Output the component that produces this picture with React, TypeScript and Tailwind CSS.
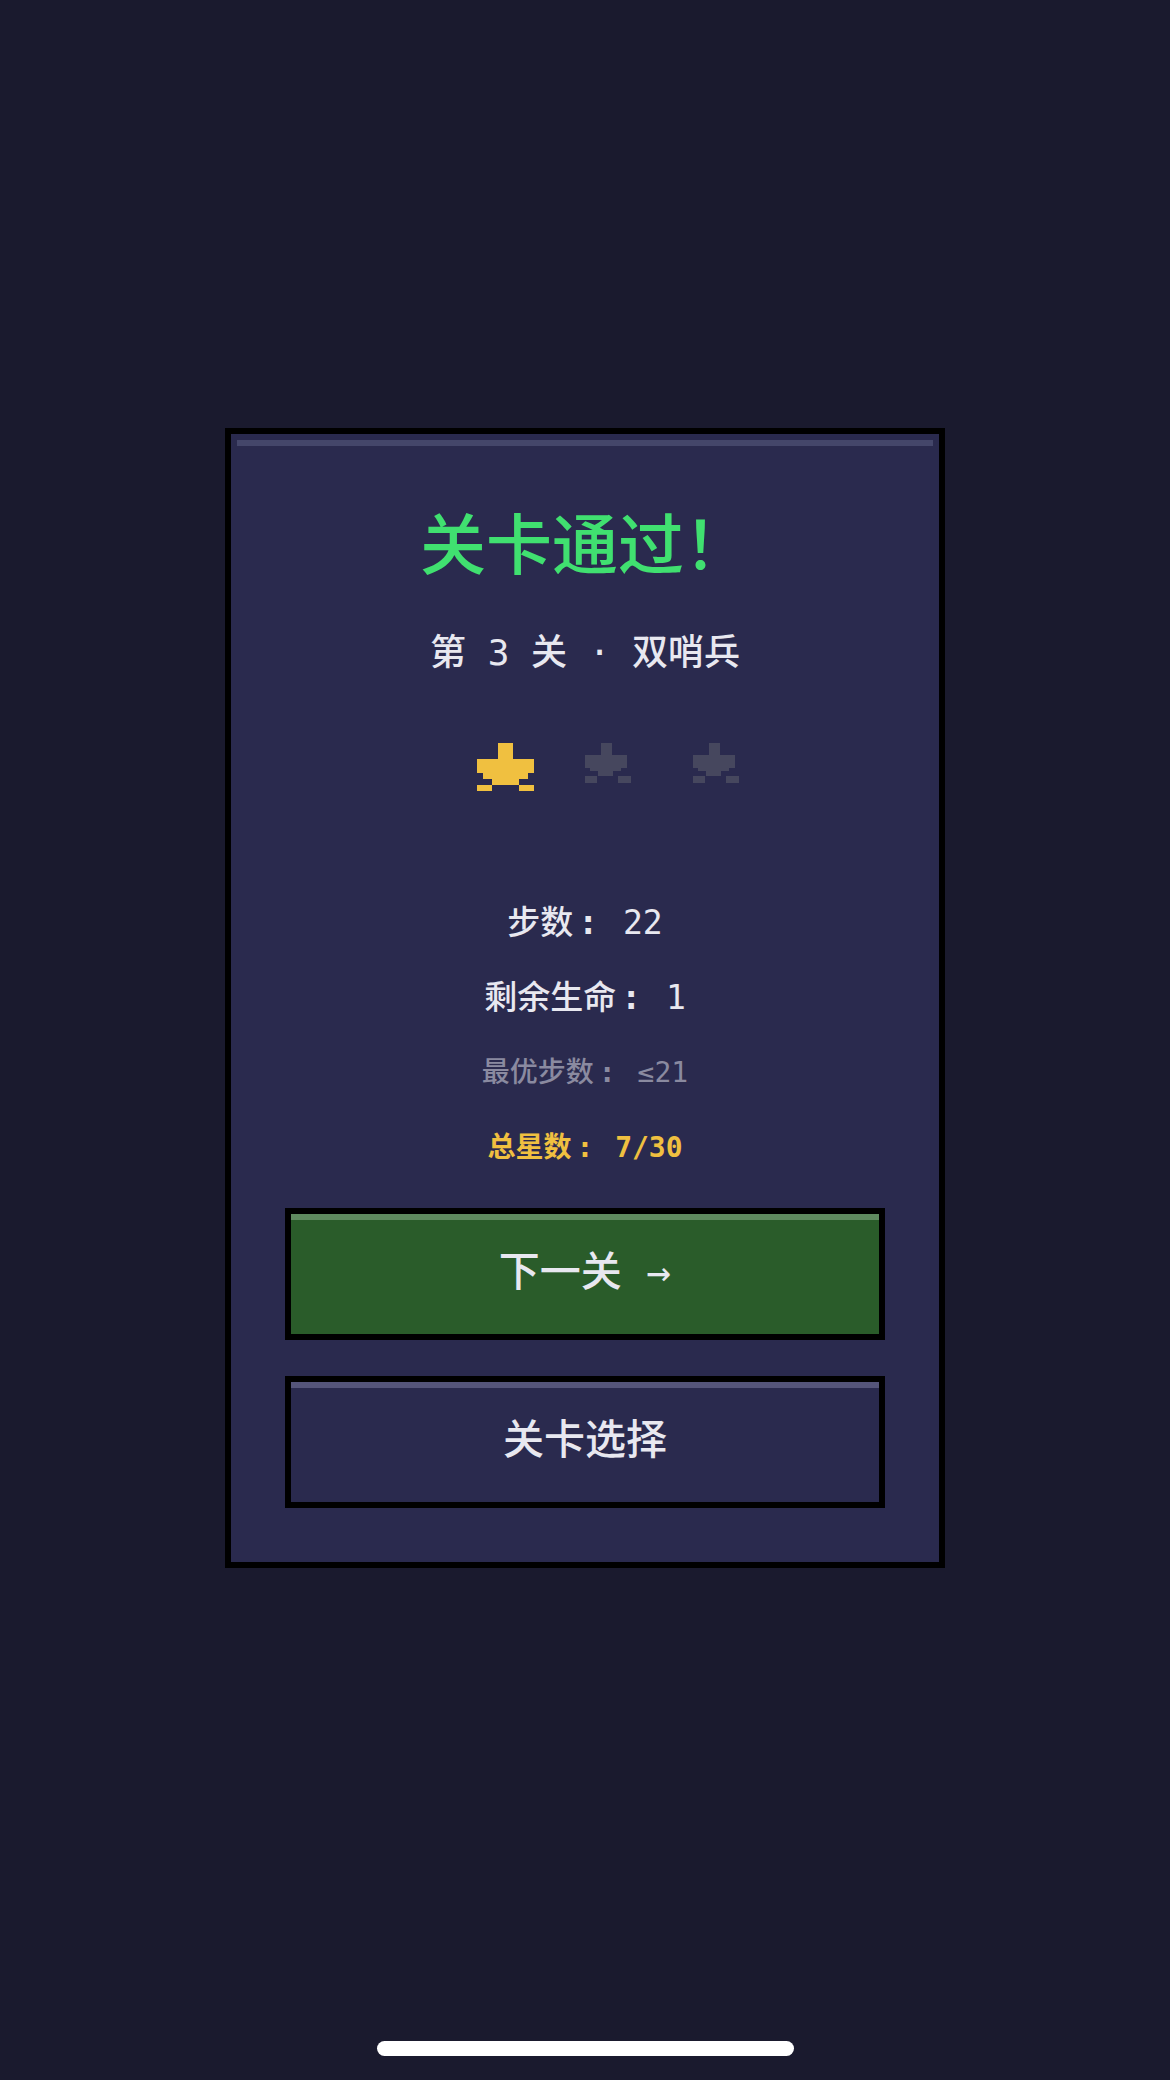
const mono = "font-['DejaVu_Sans_Mono','Noto_Sans_CJK_SC',monospace]";

function Star({ lit }: { lit: boolean }) {
  if (lit) {
    return (
      <svg width="57" height="48" viewBox="0 0 57 48" shapeRendering="crispEdges" fill="#f0c040">
        <rect x="21" y="0" width="15" height="16" />
        <rect x="0" y="16" width="57" height="14" />
        <rect x="6" y="30" width="45" height="6" />
        <rect x="15" y="36" width="27" height="6" />
        <rect x="0" y="42" width="15" height="6" />
        <rect x="42" y="42" width="15" height="6" />
      </svg>
    );
  }
  return (
    <svg width="46" height="40" viewBox="0 0 46 40" shapeRendering="crispEdges" fill="#46475e">
      <rect x="16" y="0" width="11" height="12" />
      <rect x="0" y="12" width="42" height="13" />
      <rect x="5" y="25" width="31" height="3" />
      <rect x="13" y="28" width="15" height="5" />
      <rect x="0" y="33" width="12" height="7" />
      <rect x="33" y="33" width="13" height="7" />
    </svg>
  );
}

function Stat({ label, value, className }: { label: string; value: string; className: string }) {
  return (
    <p className={`leading-[48px] whitespace-pre ${className}`}>
      {label}
      <span className="mx-[5px] font-bold">:</span>
      {" " + value}
    </p>
  );
}

export default function App() {
  return (
    <div className={`relative flex h-[2080px] items-start justify-center bg-[#1a1a2e] pt-[428px] ${mono}`}>
      <div className="relative flex h-[1140px] w-[720px] flex-col items-center border-[6px] border-black bg-[#2a2a4e]">
        <div className="absolute top-[6px] right-[6px] left-[6px] h-[6px] bg-[#44466a]" />

        <h1 className="mt-[63px] text-[66px] leading-[100px] font-medium text-[#40e070]">关卡通过！</h1>
        <p className="mt-[31px] text-[36px] leading-[50px] font-medium whitespace-pre text-[#e8e8f0]">第 3 关 · 双哨兵</p>

        <div className="mt-[65px] flex h-[48px] items-start pl-[108px]">
          <div className="w-[108px]"><Star lit /></div>
          <div className="w-[108px]"><Star lit={false} /></div>
          <div className="w-[108px]"><Star lit={false} /></div>
        </div>

        <div className="mt-[108px] flex flex-col items-center gap-[27px]">
          <Stat label="步数" value="22" className="text-[33px] font-medium text-[#e8e8f0]" />
          <Stat label="剩余生命" value="1" className="text-[33px] font-medium text-[#e8e8f0]" />
          <Stat label="最优步数" value="≤21" className="text-[28px] font-medium text-[#8a8aa0]" />
          <Stat label="总星数" value="7/30" className="text-[28px] font-bold text-[#f0c040]" />
        </div>

        <button className="relative mt-[36px] h-[132px] w-[600px] border-[6px] border-black bg-[#2a5c2a] pb-[3px] text-[41px] font-medium text-[#e8e8f0]">
          <span className="absolute top-0 right-0 left-0 h-[6px] bg-[#5f8a5f]" />
          下一关 →
        </button>
        <button className="relative mt-[36px] h-[132px] w-[600px] border-[6px] border-black bg-[#2a2a4e] pb-[3px] text-[41px] font-medium text-[#e8e8f0]">
          <span className="absolute top-0 right-0 left-0 h-[6px] bg-[#55557a]" />
          关卡选择
        </button>
      </div>

      <div className="absolute top-[2041px] left-[377px] h-[15px] w-[417px] rounded-full bg-white" />
    </div>
  );
}
